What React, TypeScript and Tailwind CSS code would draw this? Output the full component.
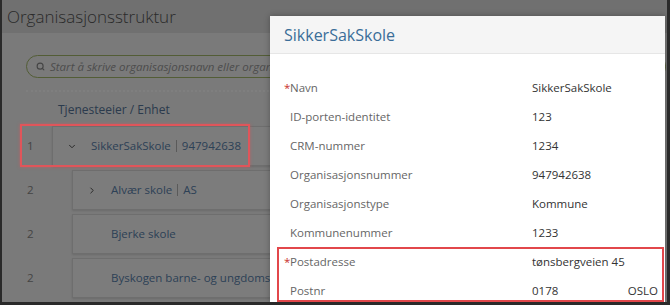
import { ChevronDown, ChevronRight, Search } from "lucide-react";

type Unit = {
  nr: number;
  level: number;
  name: string;
  code?: string;
  toggle?: "open" | "closed";
  marked?: boolean;
};

const units: Unit[] = [
  { nr: 1, level: 1, name: "SikkerSakSkole", code: "947942638", toggle: "open", marked: true },
  { nr: 2, level: 2, name: "Alvær skole", code: "AS", toggle: "closed" },
  { nr: 2, level: 2, name: "Bjerke skole" },
  { nr: 2, level: 2, name: "Byskogen barne- og ungdomsskole" },
];

type Field = { label: string; value: string; extra?: string; required?: boolean };

const fields: Field[] = [
  { label: "Navn", value: "SikkerSakSkole", required: true },
  { label: "ID-porten-identitet", value: "123" },
  { label: "CRM-nummer", value: "1234" },
  { label: "Organisasjonsnummer", value: "947942638" },
  { label: "Organisasjonstype", value: "Kommune" },
  { label: "Kommunenummer", value: "1233" },
];

const address: Field[] = [
  { label: "Postadresse", value: "tønsbergveien 45", required: true },
  { label: "Postnr", value: "0178", extra: "OSLO" },
];

function UnitRow({ u }: { u: Unit }) {
  return (
    <div className="relative flex h-[40px]">
      <div className="w-[32px] shrink-0 pl-[7px] flex items-center text-[#8a8a8a]">{u.nr}</div>
      <div
        className={
          "flex-1 flex items-center pl-[14px] border border-[#dcdcdc] bg-[#f9f9f9] shadow-[0_1px_2px_rgba(0,0,0,0.12)] whitespace-nowrap " +
          (u.level > 1 ? "ml-[20px]" : "")
        }
      >
        <span className="w-[10px] flex justify-center text-[#444]">
          {u.toggle === "open" && <ChevronDown className="w-[11px] h-[11px]" strokeWidth={2.2} />}
          {u.toggle === "closed" && <ChevronRight className="w-[11px] h-[11px]" strokeWidth={2.2} />}
        </span>
        <span className="ml-[14px] text-[#5a82ad]">{u.name}</span>
        {u.code && (
          <>
            <span className="mx-[5px] h-[12px] w-px bg-[#b5b5b5]" />
            <span className="text-[#5a82ad]">{u.code}</span>
          </>
        )}
      </div>
      {u.marked && (
        <div className="absolute -top-[2px] -bottom-[1px] left-0 w-[230px] z-20 border-2 border-[#e0555a] shadow-[0_0_3px_rgba(224,85,90,0.6)]" />
      )}
    </div>
  );
}

function FieldRow({ f }: { f: Field }) {
  return (
    <div className="flex h-[29px] items-center">
      <div className="w-[262px] shrink-0 pl-[14px] flex text-[#666]">
        <span className="w-[6px] text-[#c9302c]">{f.required ? "*" : ""}</span>
        <span>{f.label}</span>
      </div>
      <div className="flex-1 pr-[7px] flex justify-between text-[#333]">
        <span>{f.value}</span>
        {f.extra && <span>{f.extra}</span>}
      </div>
    </div>
  );
}

export default function App() {
  return (
    <div className="w-[670px] h-[305px] bg-[#2a2a2a] pl-[2px] pr-[3px] pb-[3px] font-['Open_Sans',sans-serif] text-[11.5px]">
      <div className="relative h-full overflow-hidden bg-[#f4f4f4]">
        <div className="h-[33px] bg-[#e0e0e0] pl-[5px] flex items-center text-[17px] font-light text-[#555]">
          Organisasjonsstruktur
        </div>

        <div className="px-[18px]">
          <div className="ml-[6px] mt-[22px] h-[23px] w-[640px] rounded-full border-[1.5px] border-[#a6bb6c] flex items-center pl-[9px] gap-[5px] italic text-[#9a9a9a] whitespace-nowrap">
            <Search className="w-[9px] h-[9px] text-[#888]" strokeWidth={3} />
            <span>Start å skrive organisasjonsnavn eller organisasjonsnummer</span>
          </div>
          <div className="ml-[6px] mt-[12px] border-t-2 border-dotted border-[#ffffff]" />

          <div className="ml-[38px] mt-[9px] mb-[7px] leading-[18px] text-[12px] text-[#56769a]">Tjenesteeier / Enhet</div>

          <div className="flex flex-col gap-[4px]">
            {units.map((u, i) => (
              <UnitRow key={i} u={u} />
            ))}
          </div>
        </div>

        <div className="absolute inset-0 z-10 bg-black/50" />

        <div className="absolute left-[268px] top-[16px] right-[2px] bottom-0 z-30 bg-white shadow-[0_0_6px_rgba(0,0,0,0.3)]">
          <div className="h-[38px] bg-[#f5f5f5] border-b border-[#e6e6e6] pl-[14px] flex items-center text-[16px] text-[#3a6d98]">
            SikkerSakSkole
          </div>
          <div className="pt-[19px]">
            {fields.map((f) => (
              <FieldRow key={f.label} f={f} />
            ))}
            <div className="relative">
              {address.map((f) => (
                <FieldRow key={f.label} f={f} />
              ))}
              <div className="absolute left-[7px] right-[1px] top-0 h-[55px] border-2 border-[#e2474b]" />
            </div>
          </div>
        </div>
      </div>
    </div>
  );
}
